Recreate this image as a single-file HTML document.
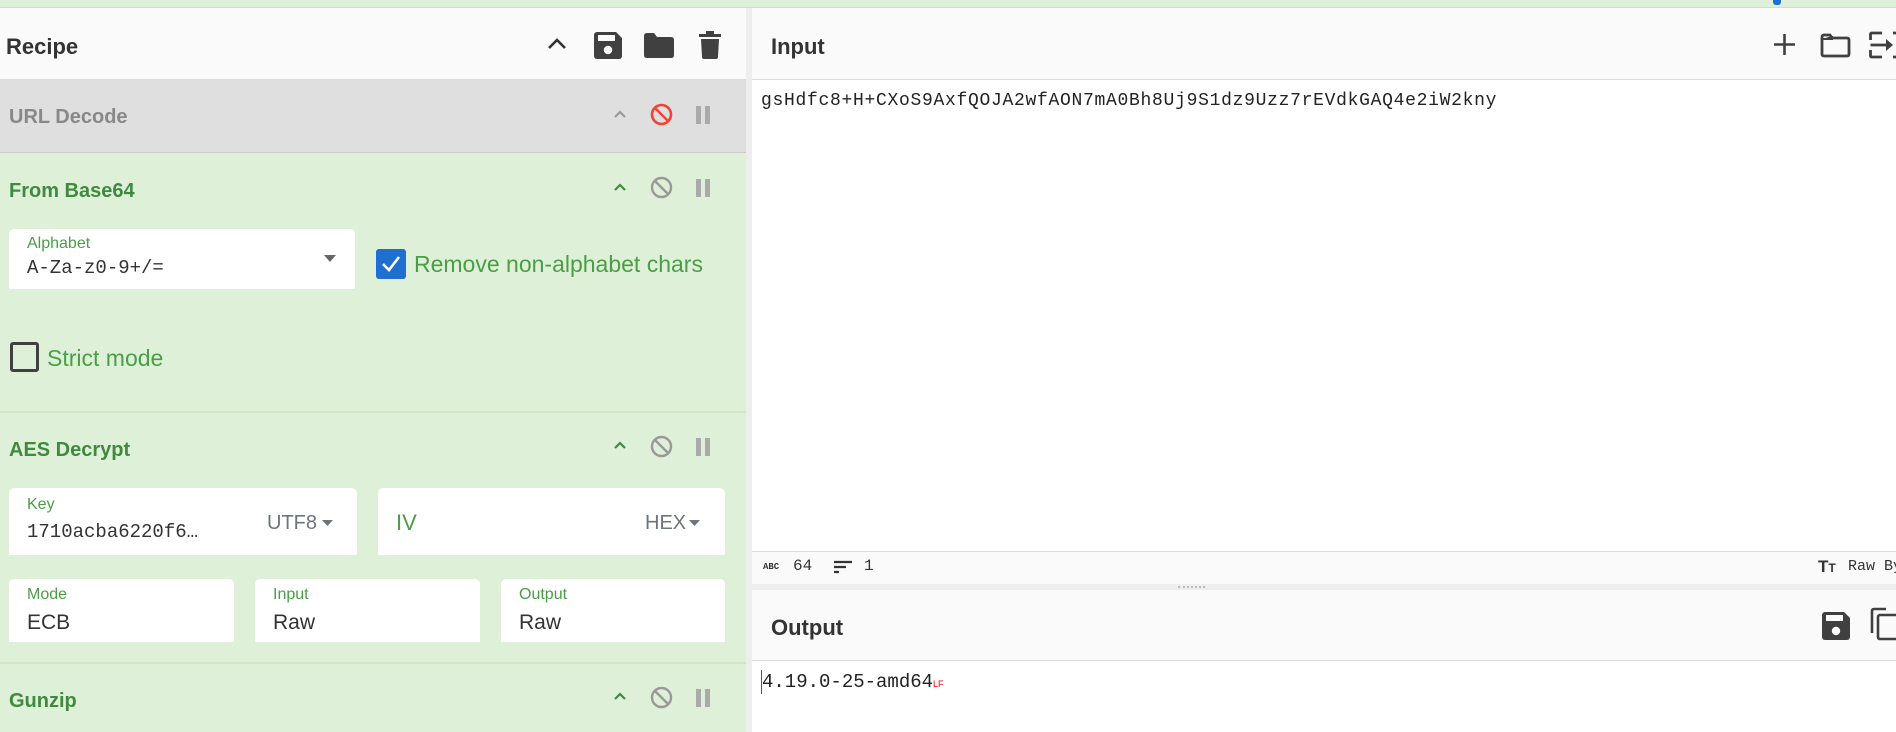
<!DOCTYPE html>
<html><head><meta charset="utf-8"><style>
*{margin:0;padding:0;box-sizing:border-box}
body{width:1896px;height:732px;overflow:hidden;background:#fff;font-family:"Liberation Sans",sans-serif;position:relative}
.a{position:absolute;white-space:nowrap}
.mono{font-family:"Liberation Mono",monospace}
.ttl{font-weight:bold;font-size:19px;color:#408a3f}
.box{position:absolute;background:#fff;border-radius:5px 5px 0 0}
.lbl{position:absolute;left:24px;font-size:16px;color:#4a9e46}
.val{position:absolute;left:24px;font-size:21px;color:#333}
</style></head><body>
<div class="a" style="left:0;top:0;width:1896px;height:8px;background:#dff0d8;border-bottom:1px solid #d0dcd0"></div>
<div class="a" style="left:1773px;top:0;width:8px;height:5px;background:#1e6fd0;border-radius:0 0 3px 3px"></div>

<div class="a" style="left:0;top:8px;width:746px;height:72px;background:#fafafa;border-bottom:1px solid #ddd"></div>
<div class="a" style="left:6px;top:34px;font-size:22px;font-weight:bold;color:#333">Recipe</div>
<svg class="a" style="left:546px;top:36px" width="22" height="16" viewBox="0 0 22 16"><path d="M3 12 L11 4 L19 12" fill="none" stroke="#333" stroke-width="2.6"/></svg>
<svg class="a" style="left:594px;top:32px" width="28" height="27" viewBox="0 0 28 27"><rect x="0" y="0" width="28" height="27" rx="3" fill="#404040"/><rect x="4" y="3" width="17" height="6" fill="#fafafa"/><circle cx="14" cy="18" r="4.2" fill="#fafafa"/><path d="M22 0 L28 6 L28 0Z" fill="#fafafa"/></svg>
<svg class="a" style="left:644px;top:33px" width="30" height="25" viewBox="0 0 30 25"><path d="M0 3 Q0 0 3 0 L10 0 L13 4 L27 4 Q30 4 30 7 L30 22 Q30 25 27 25 L3 25 Q0 25 0 22Z" fill="#404040"/></svg>
<svg class="a" style="left:699px;top:31px" width="22" height="28" viewBox="0 0 22 28"><rect x="0" y="3" width="22" height="3" fill="#404040"/><rect x="7" y="0" width="8" height="4" fill="#404040"/><path d="M2 8 L20 8 L19 26 Q19 28 17 28 L5 28 Q3 28 3 26Z" fill="#404040"/></svg>

<div class="a" style="left:0;top:80px;width:746px;height:73px;background:#dfdfdf;border-bottom:1px solid #ccc"></div>
<div class="a ttl" style="left:9px;top:106px;color:#888;font-size:20px">URL Decode</div>
<svg class="a" style="left:612px;top:108px" width="16" height="12" viewBox="0 0 16 12"><path d="M3 9 L8 4 L13 9" fill="none" stroke="#999" stroke-width="2.2"/></svg>
<svg class="a" style="left:650px;top:103px" width="23" height="23" viewBox="0 0 23 23"><circle cx="11.5" cy="11.5" r="9.5" fill="none" stroke="#f44336" stroke-width="2.6"/><path d="M5 5 L18 18" stroke="#f44336" stroke-width="2.6"/></svg>
<div class="a" style="left:696px;top:106px;width:5px;height:18px;background:#aaa"></div>
<div class="a" style="left:705px;top:106px;width:5px;height:18px;background:#aaa"></div>

<div class="a" style="left:0;top:153px;width:746px;height:579px;background:#dff0d8"></div>
<div class="a" style="left:0;top:411px;width:746px;height:2px;background:#d0e8c8"></div>
<div class="a" style="left:0;top:662px;width:746px;height:2px;background:#d0e8c8"></div>

<svg class="a" style="left:612px;top:181px" width="16" height="12" viewBox="0 0 16 12"><path d="M3 9 L8 4 L13 9" fill="none" stroke="#408a3f" stroke-width="2.2"/></svg>
<svg class="a" style="left:650px;top:176px" width="23" height="23" viewBox="0 0 23 23"><circle cx="11.5" cy="11.5" r="9.5" fill="none" stroke="#999" stroke-width="2.4"/><path d="M5 5 L18 18" stroke="#999" stroke-width="2.4"/></svg>
<div class="a" style="left:696px;top:179px;width:5px;height:18px;background:#aaa"></div>
<div class="a" style="left:705px;top:179px;width:5px;height:18px;background:#aaa"></div>

<svg class="a" style="left:612px;top:439px" width="16" height="12" viewBox="0 0 16 12"><path d="M3 9 L8 4 L13 9" fill="none" stroke="#408a3f" stroke-width="2.2"/></svg>
<svg class="a" style="left:650px;top:435px" width="23" height="23" viewBox="0 0 23 23"><circle cx="11.5" cy="11.5" r="9.5" fill="none" stroke="#999" stroke-width="2.4"/><path d="M5 5 L18 18" stroke="#999" stroke-width="2.4"/></svg>
<div class="a" style="left:696px;top:438px;width:5px;height:18px;background:#aaa"></div>
<div class="a" style="left:705px;top:438px;width:5px;height:18px;background:#aaa"></div>

<svg class="a" style="left:612px;top:690px" width="16" height="12" viewBox="0 0 16 12"><path d="M3 9 L8 4 L13 9" fill="none" stroke="#408a3f" stroke-width="2.2"/></svg>
<svg class="a" style="left:650px;top:686px" width="23" height="23" viewBox="0 0 23 23"><circle cx="11.5" cy="11.5" r="9.5" fill="none" stroke="#999" stroke-width="2.4"/><path d="M5 5 L18 18" stroke="#999" stroke-width="2.4"/></svg>
<div class="a" style="left:696px;top:689px;width:5px;height:18px;background:#aaa"></div>
<div class="a" style="left:705px;top:689px;width:5px;height:18px;background:#aaa"></div>

<div class="a ttl" style="left:9px;top:180px;font-size:20px">From Base64</div>
<div class="box" style="left:9px;top:229px;width:346px;height:60px">
 <div class="lbl" style="top:6px;left:18px">Alphabet</div>
 <div class="val mono" style="top:28px;left:18px;font-size:19px">A-Za-z0-9+/=</div>
 <svg class="a" style="left:315px;top:26px" width="12" height="8"><path d="M0 0 L12 0 L6 7Z" fill="#666"/></svg>
</div>
<div class="a" style="left:376px;top:249px;width:30px;height:30px;background:#1e6fd0;border-radius:3px"></div>
<svg class="a" style="left:376px;top:249px" width="30" height="30"><path d="M7 15 L13 21 L23 8" fill="none" stroke="#fff" stroke-width="2.6"/></svg>
<div class="a" style="left:414px;top:251px;font-size:23px;color:#4a9e46">Remove non-alphabet chars</div>
<div class="a" style="left:10px;top:342px;width:29px;height:30px;border:3px solid #404040;border-radius:3px"></div>
<div class="a" style="left:47px;top:345px;font-size:23px;color:#4a9e46">Strict mode</div>

<div class="a ttl" style="left:9px;top:439px;font-size:20px">AES Decrypt</div>
<div class="box" style="left:9px;top:488px;width:348px;height:67px">
 <div class="lbl" style="top:8px;left:18px">Key</div>
 <div class="val mono" style="top:33px;left:18px;font-size:19px">1710acba6220f6…</div>
 <div class="a" style="left:258px;top:24px;font-size:20px;color:#6c757d">UTF8</div>
 <svg class="a" style="left:313px;top:32px" width="11" height="7"><path d="M0 0 L11 0 L5.5 6Z" fill="#6c757d"/></svg>
</div>
<div class="box" style="left:378px;top:488px;width:347px;height:67px">
 <div class="a" style="left:18px;top:22px;font-size:22px;color:#4a9e46">IV</div>
 <div class="a" style="left:267px;top:24px;font-size:20px;color:#6c757d">HEX</div>
 <svg class="a" style="left:311px;top:32px" width="11" height="7"><path d="M0 0 L11 0 L5.5 6Z" fill="#6c757d"/></svg>
</div>
<div class="box" style="left:9px;top:579px;width:225px;height:63px"><div class="lbl" style="top:7px;left:18px">Mode</div><div class="val" style="top:32px;left:18px">ECB</div></div>
<div class="box" style="left:255px;top:579px;width:225px;height:63px"><div class="lbl" style="top:7px;left:18px">Input</div><div class="val" style="top:32px;left:18px">Raw</div></div>
<div class="box" style="left:501px;top:579px;width:224px;height:63px"><div class="lbl" style="top:7px;left:18px">Output</div><div class="val" style="top:32px;left:18px">Raw</div></div>

<div class="a ttl" style="left:9px;top:690px;font-size:20px">Gunzip</div>

<div class="a" style="left:746px;top:8px;width:6px;height:724px;background:#eee"></div>

<div class="a" style="left:752px;top:8px;width:1144px;height:72px;background:#fafafa;border-bottom:1px solid #ddd"></div>
<div class="a" style="left:771px;top:34px;font-size:22px;font-weight:bold;color:#333">Input</div>
<svg class="a" style="left:1773px;top:33px" width="23" height="23"><path d="M11.5 1 V22 M1 11.5 H22" stroke="#404040" stroke-width="2.6"/></svg>
<svg class="a" style="left:1820px;top:33px" width="31" height="25" viewBox="0 0 31 25"><path d="M2 4 Q2 2 4 2 L10 2 L12 5 L27 5 Q29 5 29 7 L29 21 Q29 23 27 23 L4 23 Q2 23 2 21Z" fill="none" stroke="#404040" stroke-width="2.8"/><path d="M2 6 H12 V3" fill="#404040" stroke="#404040" stroke-width="2"/></svg>
<svg class="a" style="left:1869px;top:31px" width="27" height="28" viewBox="0 0 27 28"><path d="M13 2 H3 Q1.5 2 1.5 3.5 V9 M1.5 19 V24.5 Q1.5 26 3 26 H13" fill="none" stroke="#404040" stroke-width="2.8"/><path d="M1.5 14 H20" stroke="#404040" stroke-width="2.8"/><path d="M17 8 L24 14 L17 20Z" fill="#404040"/><path d="M24 2 H27 M24 26 H27" stroke="#404040" stroke-width="2.8"/></svg>
<div class="a mono" style="left:761px;top:91px;font-size:18px;letter-spacing:0.7px;color:#222">gsHdfc8+H+CXoS9AxfQOJA2wfAON7mA0Bh8Uj9S1dz9Uzz7rEVdkGAQ4e2iW2kny</div>

<div class="a" style="left:752px;top:551px;width:1144px;height:33px;background:#fafafa;border-top:1px solid #ddd"></div>
<div class="a mono" style="left:763px;top:562px;font-size:9px;font-weight:bold;color:#333">ABC</div>
<div class="a mono" style="left:793px;top:557px;font-size:16px;color:#333">64</div>
<svg class="a" style="left:833px;top:560px" width="20" height="15"><path d="M1 2 H19 M1 7 H13 M1 12 H6" stroke="#333" stroke-width="2.2"/></svg>
<div class="a mono" style="left:864px;top:557px;font-size:16px;color:#333">1</div>
<div class="a" style="left:1818px;top:557px;font-size:17px;font-weight:bold;color:#333">T<span style="font-size:12px">T</span></div>
<div class="a mono" style="left:1848px;top:558px;font-size:15px;color:#333">Raw By</div>
<div class="a" style="left:752px;top:584px;width:1144px;height:6px;background:#eee"></div>
<div class="a" style="left:1178px;top:586px;width:27px;height:2px;border-top:2px dotted #bbb"></div>

<div class="a" style="left:752px;top:590px;width:1144px;height:71px;background:#fafafa;border-bottom:1px solid #ddd"></div>
<div class="a" style="left:771px;top:615px;font-size:22px;font-weight:bold;color:#333">Output</div>
<svg class="a" style="left:1822px;top:612px" width="28" height="28" viewBox="0 0 28 28"><rect x="0" y="0" width="28" height="28" rx="3" fill="#404040"/><rect x="4" y="3" width="17" height="6" fill="#fafafa"/><circle cx="14" cy="19" r="4.2" fill="#fafafa"/><path d="M22 0 L28 6 L28 0Z" fill="#fafafa"/></svg>
<svg class="a" style="left:1870px;top:607px" width="26" height="34" viewBox="0 0 26 34"><path d="M16 2 H4 Q2 2 2 4 V26" fill="none" stroke="#404040" stroke-width="2.6"/><rect x="8" y="8" width="20" height="24" rx="2" fill="none" stroke="#404040" stroke-width="2.6"/></svg>
<div class="a" style="left:761px;top:670px;width:1px;height:24px;background:#555"></div>
<div class="a mono" style="left:762px;top:671px;font-size:19px;color:#222">4.19.0-25-amd64<span style="font-size:9px;color:#e00;font-family:'Liberation Sans',sans-serif;letter-spacing:0">LF</span></div>
</body></html>
